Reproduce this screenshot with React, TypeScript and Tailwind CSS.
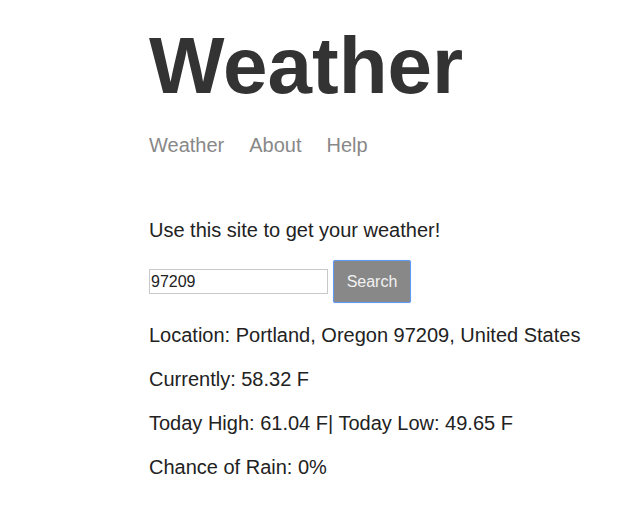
import React from 'react';

export default function App() {
  const nav = ['Weather', 'About', 'Help'];
  const results = [
    'Location: Portland, Oregon 97209, United States',
    'Currently: 58.32 F',
    'Today High: 61.04 F| Today Low: 49.65 F',
    'Chance of Rain: 0%',
  ];

  return (
    <div className="min-h-[511px] bg-white pl-[149px] pt-[20px] font-['Liberation_Sans',Arial,sans-serif] text-[#222]">
      {/* Title */}
      <h1 className="text-[80px] leading-[92px] font-bold text-[#333]">Weather</h1>

      {/* Nav */}
      <nav className="mt-[21px] flex gap-[25px] text-[20px] leading-[24px] text-[#888]">
        {nav.map((item) => (
          <a key={item} href="#" className="text-[#888]">
            {item}
          </a>
        ))}
      </nav>

      <p className="mt-[61px] text-[20px] leading-[24px]">Use this site to get your weather!</p>

      {/* Search form */}
      <form className="mt-[18px] flex items-center gap-[5px]" onSubmit={(e) => e.preventDefault()}>
        <input
          type="text"
          defaultValue="97209"
          className="w-[179px] h-[25px] border border-[#c8c8c8] px-[1px] text-[16px] text-[#222] outline-none"
        />
        <button
          type="submit"
          className="w-[78px] h-[43px] bg-[#888] border border-[#5f9cf5] rounded-[2px] shadow-[0_0_1px_#9cc2f7] text-[16px] text-[#f2f2f2]"
        >
          Search
        </button>
      </form>

      {/* Results */}
      <div className="mt-[20px] flex flex-col gap-[20px] text-[20px] leading-[24px]">
        {results.map((line) => (
          <p key={line}>{line}</p>
        ))}
      </div>
    </div>
  );
}
